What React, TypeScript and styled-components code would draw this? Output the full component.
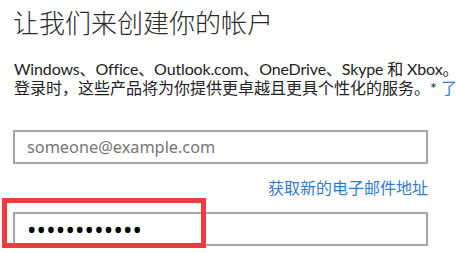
import React from "react";
import styled, { createGlobalStyle } from "styled-components";

const GlobalStyle = createGlobalStyle`
  html, body {
    margin: 0;
    padding: 0;
    background: #fff;
    overflow: hidden;
  }
  body {
    font-family: "Noto Sans", "Noto Sans CJK SC", sans-serif;
  }
`;

const Page = styled.div`
  width: 456px;
  height: 253px;
  padding: 5px 0 0 13px;
  box-sizing: border-box;
  overflow: hidden;
`;

const Title = styled.h1`
  margin: 0;
  font-family: "Noto Sans CJK SC", sans-serif;
  font-size: 26px;
  line-height: 34px;
  font-weight: 300;
  color: #2b2b2b;
  white-space: nowrap;
`;

const Desc = styled.p`
  margin: 20px 0 0 1px;
  font-family: "Lato", "Noto Sans CJK SC", sans-serif;
  font-size: 16px;
  line-height: 19px;
  color: #222;
  white-space: nowrap;
`;

const Line = styled.span<{ $tight?: boolean }>`
  display: block;
  letter-spacing: ${({ $tight }) => ($tight ? "-0.15px" : "0")};
`;

const InlineLink = styled.a`
  color: #2f7ad3;
  text-decoration: none;
`;

const Field = styled.input`
  display: block;
  width: 415px;
  height: 34px;
  box-sizing: border-box;
  margin: 0;
  padding: 0 12px;
  border: 2px solid #a6a6a6;
  outline: none;
  background: #fff;
  font-family: "Noto Sans", sans-serif;
  font-size: 16.3px;
  color: #000;

  &::placeholder {
    color: #767676;
  }
`;

const EmailField = styled(Field)`
  margin-top: 33px;
`;

const LinkRow = styled.div`
  width: 415px;
  margin-top: 12px;
  text-align: right;
  font-family: "Noto Sans CJK SC", sans-serif;
  font-size: 16px;
  line-height: 22px;
`;

const NewEmailLink = styled.a`
  color: #2f7ad3;
  text-decoration: none;
`;

const PasswordWrap = styled.div`
  position: relative;
  margin-top: 14px;
`;

const PasswordField = styled(Field)`
  font-size: 25px;
  letter-spacing: 0.2px;
`;

const Highlight = styled.div`
  position: absolute;
  left: -11px;
  top: -14px;
  width: 204px;
  height: 50px;
  box-sizing: border-box;
  border: 5px solid #f23a3f;
  pointer-events: none;
`;

export default function App() {
  return (
    <>
      <GlobalStyle />
      <Page>
        <Title>让我们来创建你的帐户</Title>
        <Desc>
          <Line $tight>Windows、Office、Outlook.com、OneDrive、Skype 和 Xbox。</Line>
          <Line>
            登录时，这些产品将为你提供更卓越且更具个性化的服务。*{" "}
            <InlineLink href="#">了解更多</InlineLink>
          </Line>
        </Desc>
        <EmailField type="email" placeholder="someone@example.com" />
        <LinkRow>
          <NewEmailLink href="#">获取新的电子邮件地址</NewEmailLink>
        </LinkRow>
        <PasswordWrap>
          <PasswordField type="password" defaultValue="passwordtest" />
          <Highlight />
        </PasswordWrap>
      </Page>
    </>
  );
}
